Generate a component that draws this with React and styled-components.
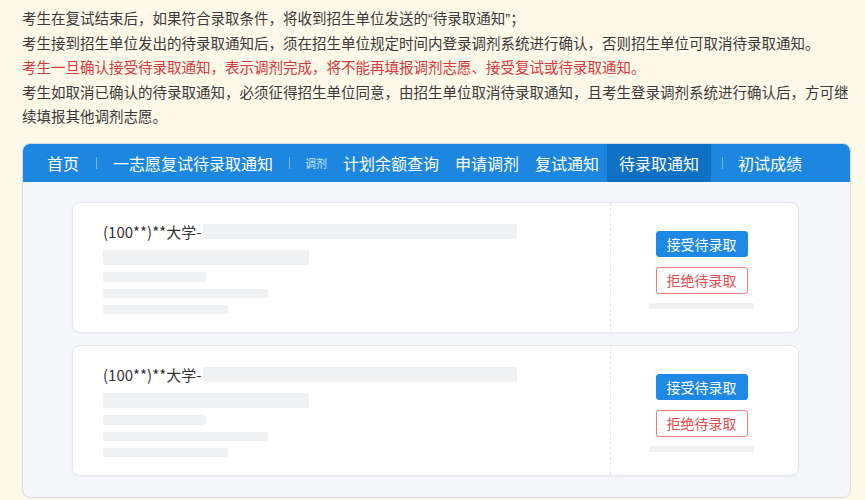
import React from "react";
import styled, { createGlobalStyle } from "styled-components";

const GlobalStyle = createGlobalStyle`
  html, body {
    margin: 0;
    padding: 0;
    background: #fdf8e8;
  }
  body {
    font-family: "Noto Sans CJK SC", "Noto Sans", sans-serif;
    color: #333;
  }
`;

const Page = styled.div`
  width: 865px;
  height: 500px;
  overflow: hidden;
  padding: 7px 0 0 22px;
  box-sizing: border-box;
`;

const Notice = styled.div`
  width: 835px;
  font-family: "Liberation Sans", "Noto Sans CJK SC", sans-serif;
  font-size: 14.5px;
  line-height: 24.5px;
`;

const Line = styled.p`
  margin: 0;
  color: ${(p) => (p.$warn ? "#d3393d" : "#3a3a3a")};
`;

const Panel = styled.div`
  margin-top: 13px;
  width: 829px;
  background: #f5f7fa;
  border: 1px solid #d6dbe1;
  border-radius: 8px;
  overflow: hidden;
  box-sizing: border-box;
`;

const NavBar = styled.div`
  display: flex;
  align-items: stretch;
  height: 38px;
  padding-left: 16px;
  background: #1c86e1;
`;

const NavItem = styled.div`
  display: flex;
  align-items: center;
  padding: 0 ${(p) => (p.$active ? 12 : 8)}px;
  font-size: ${(p) => (p.$small ? 11 : 16)}px;
  color: ${(p) => (p.$small ? "#cfe4f8" : "#fff")};
  background: ${(p) => (p.$active ? "#1070c4" : "transparent")};
  white-space: nowrap;
`;

const NavSep = styled.span`
  align-self: center;
  width: 1px;
  height: 12px;
  margin: 0 ${(p) => p.$r || 7}px 0 ${(p) => p.$l || 8}px;
  background: rgba(255, 255, 255, 0.4);
`;

const List = styled.div`
  display: flex;
  flex-direction: column;
  gap: 12px;
  padding: 20px 51px 21px 49px;
`;

const Card = styled.div`
  display: flex;
  height: 131px;
  background: #fff;
  border: 1px solid #e3e6ea;
  border-radius: 8px;
  box-shadow: 0 1px 3px rgba(0, 0, 0, 0.04);
  box-sizing: border-box;
`;

const Info = styled.div`
  flex: 1;
  display: flex;
  flex-direction: column;
  align-items: flex-start;
  padding: 21px 0 0 30px;
`;

const TitleRow = styled.div`
  display: flex;
  align-items: center;
  gap: 2px;
  height: 15px;
  font-size: 15px;
  line-height: 15px;
  color: #333;
`;

const Skeleton = styled.div`
  width: ${(p) => p.$w}px;
  height: ${(p) => p.$h}px;
  margin-top: ${(p) => p.$mt || 0}px;
  background: #f0f1f3;
  border-radius: 1px;
`;

const Actions = styled.div`
  width: 188px;
  display: flex;
  flex-direction: column;
  align-items: center;
  justify-content: center;
  padding: 5px 6px 0 0;
  border-left: 1px dashed #e3e6ea;
  box-sizing: border-box;
`;

const Button = styled.button`
  width: 92px;
  height: ${(p) => (p.$danger ? 27 : 26)}px;
  margin-bottom: ${(p) => (p.$danger ? 9 : 10)}px;
  padding: 0;
  font-family: inherit;
  font-size: 14px;
  border-radius: 3px;
  cursor: pointer;
  color: ${(p) => (p.$danger ? "#e14d4d" : "#fff")};
  background: ${(p) => (p.$danger ? "#fff" : "#1e88e5")};
  border: 1px solid ${(p) => (p.$danger ? "#ec7b7b" : "#1e88e5")};
`;

const notice = [
  { text: "考生在复试结束后，如果符合录取条件，将收到招生单位发送的“待录取通知”；" },
  { text: "考生接到招生单位发出的待录取通知后，须在招生单位规定时间内登录调剂系统进行确认，否则招生单位可取消待录取通知。" },
  { text: "考生一旦确认接受待录取通知，表示调剂完成，将不能再填报调剂志愿、接受复试或待录取通知。", warn: true },
  { text: "考生如取消已确认的待录取通知，必须征得招生单位同意，由招生单位取消待录取通知，且考生登录调剂系统进行确认后，方可继续填报其他调剂志愿。" },
];

const OfferCard = () => (
  <Card>
    <Info>
      <TitleRow>
        (100**)**大学-
        <Skeleton $w={314} $h={15} />
      </TitleRow>
      <Skeleton $w={206} $h={15} $mt={11} />
      <Skeleton $w={103} $h={10} $mt={7} />
      <Skeleton $w={165} $h={9} $mt={7} />
      <Skeleton $w={125} $h={9} $mt={7} />
    </Info>
    <Actions>
      <Button>接受待录取</Button>
      <Button $danger>拒绝待录取</Button>
      <Skeleton $w={105} $h={6} />
    </Actions>
  </Card>
);

const App = () => {
  return (
    <Page>
      <GlobalStyle />
      <Notice>
        {notice.map((n, i) => (
          <Line key={i} $warn={n.warn}>
            {n.text}
          </Line>
        ))}
      </Notice>
      <Panel>
        <NavBar>
          <NavItem>首页</NavItem>
          <NavSep $l={9} $r={8} />
          <NavItem>一志愿复试待录取通知</NavItem>
          <NavSep />
          <NavItem $small>调剂</NavItem>
          <NavItem>计划余额查询</NavItem>
          <NavItem>申请调剂</NavItem>
          <NavItem>复试通知</NavItem>
          <NavItem $active>待录取通知</NavItem>
          <NavSep $l={11} />
          <NavItem>初试成绩</NavItem>
        </NavBar>
        <List>
          <OfferCard />
          <OfferCard />
        </List>
      </Panel>
    </Page>
  );
};

export default App;
